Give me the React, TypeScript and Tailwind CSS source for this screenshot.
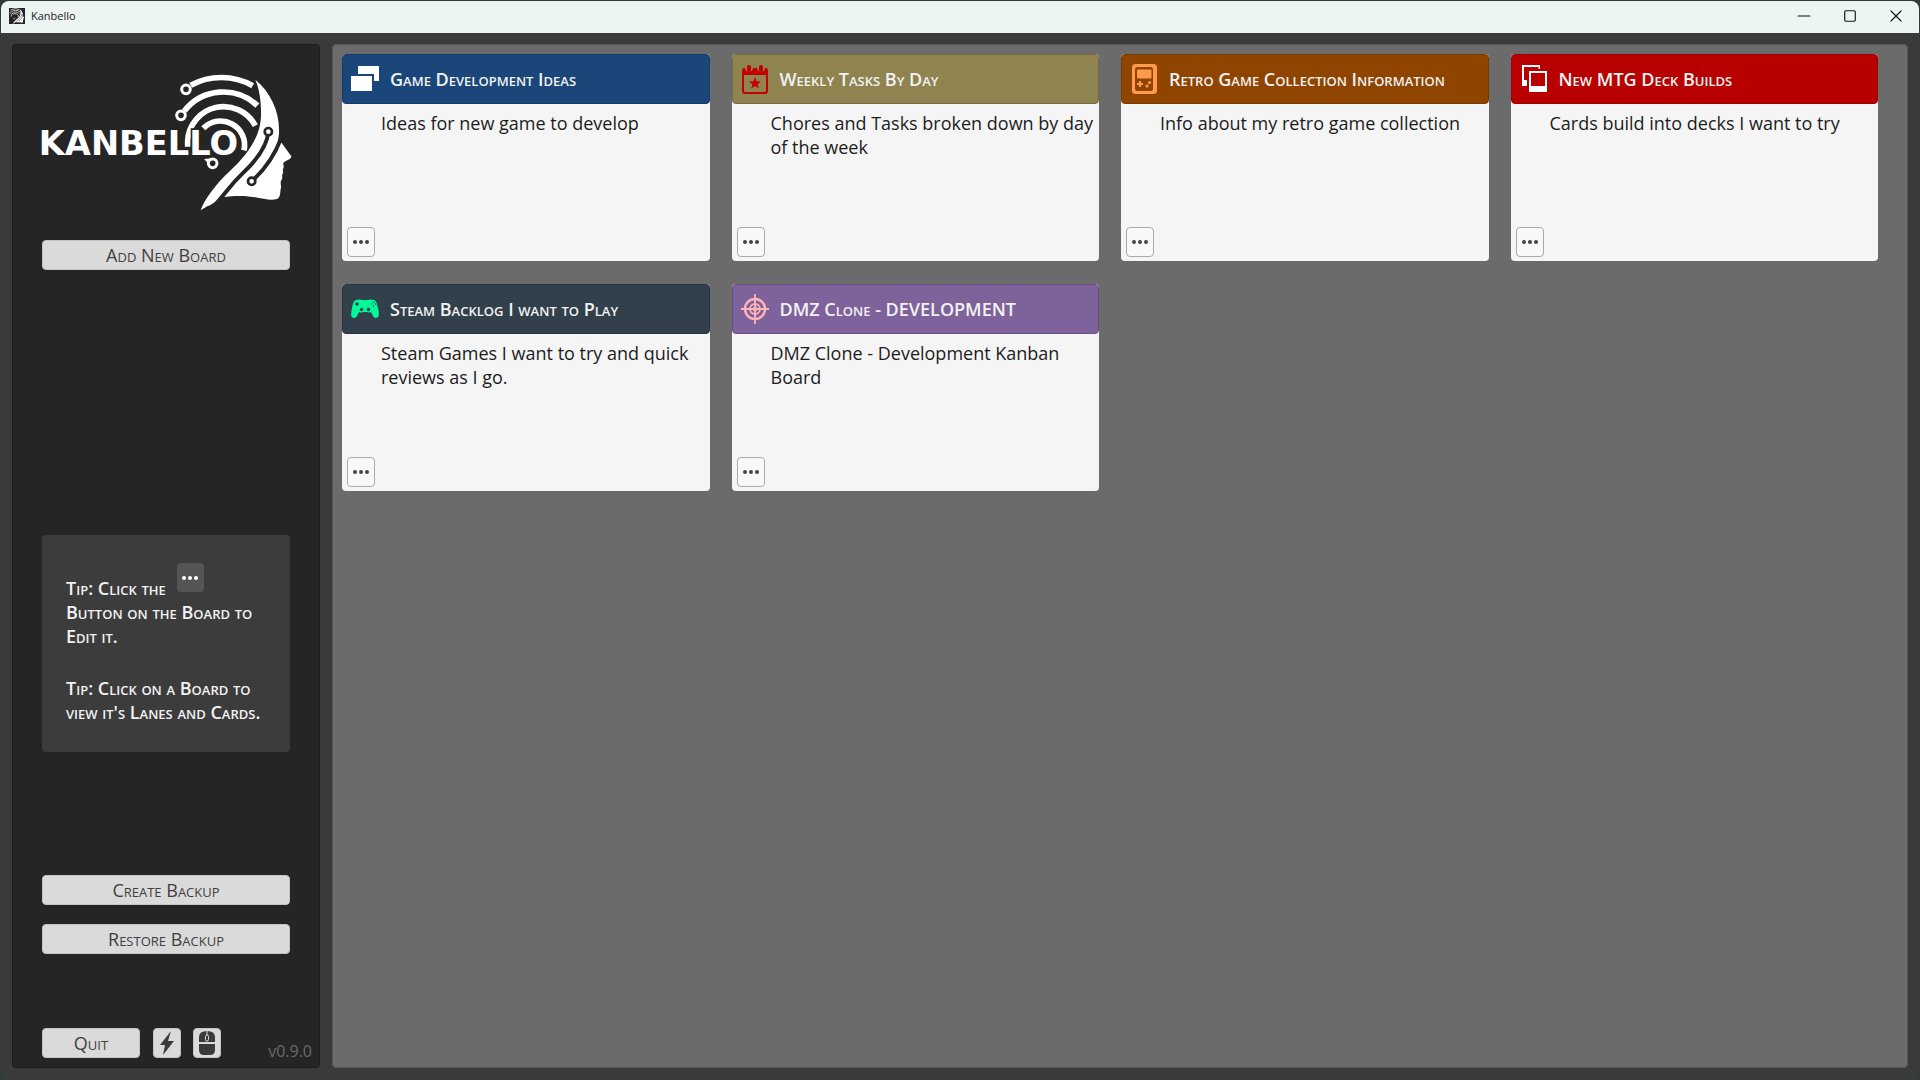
import React from "react";
import { Minus, Square, X } from "lucide-react";

type Board = {
  title: string;
  text: string;
  header: string;
  icon: React.ReactNode;
};

function WindowsIcon() {
  return (
    <svg viewBox="0 0 28 28" className="size-7" aria-hidden="true">
      <path d="M7 1h21v15h-5V9H7z" fill="#fff" />
      <rect x="0" y="11" width="21" height="15" fill="#fff" />
    </svg>
  );
}

function CalendarIcon() {
  return (
    <svg viewBox="0 0 28 30" className="h-[30px] w-7" aria-hidden="true">
      <path
        fillRule="evenodd"
        fill="#c40000"
        d="M3 4h1c0 5 8 5 8 0h4c0 5 8 5 8 0h1a2 2 0 0 1 2 2v21a3 3 0 0 1-3 3H4a3 3 0 0 1-3-3V6a2 2 0 0 1 2-2zM3 11v15.500a1.500 1.500 0 0 0 1.500 1.500h19a1.500 1.500 0 0 0 1.500-1.500V11z"
      />
      <rect x="6" y="1" width="4" height="7" rx="2" fill="#c40000" />
      <rect x="18" y="1" width="4" height="7" rx="2" fill="#c40000" />
      <path fill="#c40000" d="M14 13l1.600 4.200 4.400.2-3.400 2.800 1.200 4.400L14 22.100l-3.800 2.500 1.200-4.400L8 17.400l4.400-.2z" />
    </svg>
  );
}

function HandheldIcon() {
  return (
    <svg viewBox="0 0 28 30" className="h-[30px] w-7" aria-hidden="true">
      <rect x="2" y="0" width="25" height="30" rx="3.500" fill="#ff994d" />
      <rect x="5" y="3" width="18" height="24" rx="2.500" fill="#8f4400" />
      <rect x="7" y="5.500" width="14.500" height="9" rx="1" fill="#ff994d" />
      <path d="M10 17v6M7 20h6" stroke="#ff994d" strokeWidth="2" />
      <circle cx="19.500" cy="18.500" r="1.600" fill="#ff994d" />
      <circle cx="17" cy="22" r="1.600" fill="#ff994d" />
    </svg>
  );
}

function CardsIcon() {
  return (
    <svg viewBox="0 0 28 28" className="size-7" aria-hidden="true">
      <path d="M2 0h18v4h-1.500V2H4v13h3v6H2z" fill="#fff" />
      <path fillRule="evenodd" d="M9 6h18v21H9zM11 8v13h14V8z" fill="#fff" />
    </svg>
  );
}

function GamepadIcon() {
  return (
    <svg viewBox="0 0 28 20" className="h-5 w-7" aria-hidden="true">
      <path
        d="M5 1C8 0 10 .5 10.500 1h7C18 .5 20 0 23 1c2.500 1 3 3.500 4 8 1 4.500 1.500 8-.5 9.500-1.500 1-3.500.5-4.500-1.500l-2-4c-1 .8-3 .8-4 0h-4c-1 .8-3 .8-4 0l-2 4c-1 2-3 2.500-4.500 1.500-2-1.500-1.500-5-.5-9.500 1-4.500 1.500-7 4-8z"
        fill="#00fa9a"
      />
      <path d="M6 3v4M4 5h4" stroke="#31404b" strokeWidth="1.300" />
      <g fill="#31404b">
        <circle cx="22.500" cy="3" r=".8" />
        <circle cx="22.500" cy="7" r=".8" />
        <circle cx="20.500" cy="5" r=".8" />
        <circle cx="24.500" cy="5" r=".8" />
        <circle cx="10.500" cy="10.500" r="1.700" />
        <circle cx="17.500" cy="10.500" r="1.700" />
      </g>
    </svg>
  );
}

function CrosshairIcon() {
  return (
    <svg viewBox="0 0 28 30" className="h-[30px] w-7" fill="none" stroke="#ffb3b8" strokeWidth="2.400" aria-hidden="true">
      <circle cx="14" cy="15" r="10" />
      <circle cx="14" cy="15" r="5" strokeWidth="1.800" />
      <circle cx="14" cy="15" r="2" strokeWidth="1" />
      <path d="M14 0v30M0 15h28" strokeWidth="1.800" />
    </svg>
  );
}

const boards: Board[] = [
  { title: "Game Development Ideas", text: "Ideas for new game to develop", header: "bg-[#1b4679] border-[#123b6e]", icon: <WindowsIcon /> },
  { title: "Weekly Tasks By Day", text: "Chores and Tasks broken down by day of the week", header: "bg-[#8f8450] border-[#756a39]", icon: <CalendarIcon /> },
  { title: "Retro Game Collection Information", text: "Info about my retro game collection", header: "bg-[#8f4400] border-[#7a3900]", icon: <HandheldIcon /> },
  { title: "New MTG Deck Builds", text: "Cards build into decks I want to try", header: "bg-[#b80000] border-[#a00000]", icon: <CardsIcon /> },
  { title: "Steam Backlog I want to Play", text: "Steam Games I want to try and quick reviews as I go.", header: "bg-[#31404b] border-[#263540]", icon: <GamepadIcon /> },
  { title: "DMZ Clone - DEVELOPMENT", text: "DMZ Clone - Development Kanban Board", header: "bg-[#7e629b] border-[#6a4d88]", icon: <CrosshairIcon /> },
];

function Dots({ className }: { className: string }) {
  return (
    <svg viewBox="0 0 16 4" className={"h-1 w-4 " + className} fill="currentColor" aria-hidden="true">
      <circle cx="2" cy="2" r="2" />
      <circle cx="8" cy="2" r="2" />
      <circle cx="14" cy="2" r="2" />
    </svg>
  );
}

function LogoHead() {
  return (
    <>
      <g fill="none" stroke="#fff" strokeWidth="17">
        <path d="M482 61A193 193 0 0 1 668 62" />
        <path d="M463 138A148 148 0 0 1 682 122" />
        <path d="M473 245V228A108 108 0 0 1 676 182" />
        <path d="M520 190A72 72 0 0 1 642 256" />
      </g>
      <g fill="#252525" stroke="#fff" strokeWidth="9">
        <circle cx="468" cy="73" r="13" />
        <circle cx="453" cy="151" r="13" />
        <circle cx="548" cy="295" r="13" />
      </g>
      <path d="M522 282l24-2-10 16z" fill="#fff" />
      <path
        d="M676 44C722 82 750 140 747 205L744 232L755 234L784 274C784 284 766 287 762 292C756 298 764 302 760 310C756 318 762 320 758 326C754 332 759 338 755 344C748 352 756 364 752 372C750 384 752 396 741 402C705 412 672 382 576 397L540 421C528 424 520 432 512 436C522 406 556 358 600 318C650 270 692 218 693 150C694 110 688 72 676 44z"
        fill="#fff"
      />
      <g fill="none" stroke="#252525" strokeWidth="12">
        <path d="M715 200C712 245 680 285 640 323S590 380 560 414" />
        <path d="M665 349C700 318 733 275 754 218" />
      </g>
      <g fill="#fff" stroke="#252525" strokeWidth="8">
        <circle cx="715" cy="200" r="11" />
        <circle cx="665" cy="349" r="11" />
      </g>
    </>
  );
}

function Logo() {
  return (
    <svg viewBox="30 21 768 420" className="h-[140px] w-64" role="img" aria-label="Kanbello">
      <LogoHead />
      <text
        x="624"
        y="269"
        textAnchor="end"
        fill="#fff"
        stroke="#252525"
        strokeWidth="10"
        paintOrder="stroke"
        fontFamily="DejaVu Sans, sans-serif"
        fontWeight="700"
        fontSize="101"
      >
        KANBELLO
      </text>
    </svg>
  );
}

const sideButton =
  "flex h-[30px] items-center justify-center rounded border border-[#c4c4c4] bg-[#dadada] text-[#404040] [font-variant-caps:small-caps] text-[18px]";

export default function App() {
  return (
    <div className="min-h-screen bg-[#2f3d39] px-px pt-px font-['Open_Sans',sans-serif]">
      <div className="flex min-h-[calc(100vh-1px)] flex-col overflow-hidden rounded-lg bg-[#3a3a3a]">
        <header className="flex h-8 items-center justify-between bg-[#edf5f2] pr-[13px] pb-0.5 pl-2">
          <div className="flex items-center gap-[6px]">
            <svg viewBox="420 20 380 420" preserveAspectRatio="none" className="size-4 bg-[#252525]" aria-hidden="true">
              <LogoHead />
            </svg>
            <h1 className="text-[11px] leading-4 text-[#1a1a1a]">Kanbello</h1>
          </div>
          <div className="flex items-center gap-[29px] text-[#111]">
            <button type="button" aria-label="Minimize"><Minus className="size-5" strokeWidth={1.300} /></button>
            <button type="button" aria-label="Maximize"><Square className="size-[14px]" strokeWidth={2} /></button>
            <button type="button" aria-label="Close"><X className="size-5" strokeWidth={1.300} /></button>
          </div>
        </header>

        <div className="flex flex-1 gap-3 px-[11px] pt-[11px] pb-3">
          <aside className="flex w-[308px] shrink-0 flex-col rounded border border-[#1c1c1c] bg-[#252525] pt-[27px] pb-2">
            <div className="px-[27px]">
              <Logo />
            </div>
            <div className="flex flex-1 flex-col px-[29px]">
              <button type="button" className={sideButton + " mt-7"}>Add New Board</button>
              <div className="flex-[13]" />
              <section className="flex flex-col gap-7 rounded bg-[#3c3c3c] px-6 py-7 text-[18px] leading-6 font-semibold text-[#f2f2f2] [font-variant-caps:small-caps]">
                <p>
                  <span className="flex items-end gap-[11px]">
                    Tip: Click the
                    <span className="mb-2 flex h-[29px] w-[27px] items-center justify-center rounded bg-[#555]">
                      <Dots className="text-white" />
                    </span>
                  </span>
                  Button on the Board to Edit it.
                </p>
                <p>Tip: Click on a Board to view it's Lanes and Cards.</p>
              </section>
              <div className="flex-[6]" />
              <div className="flex flex-col gap-[19px]">
                <button type="button" className={sideButton}>Create Backup</button>
                <button type="button" className={sideButton}>Restore Backup</button>
              </div>
            </div>
            <div className="mt-[73px] flex items-center pr-[7px] pl-[29px]">
              <button type="button" className={sideButton + " w-[98px]"}>Quit</button>
              <button type="button" aria-label="Power options" className={sideButton + " ml-[13px] w-7"}>
                <svg viewBox="0 0 16 24" className="h-6 w-4" fill="#3a3a3a" aria-hidden="true">
                  <path d="M12 0L1 14h5L4 24 15 10H9z" />
                </svg>
              </button>
              <button type="button" aria-label="Mouse settings" className={sideButton + " ml-3 w-7"}>
                <svg viewBox="0 0 16 24" className="h-6 w-4" aria-hidden="true">
                  <path d="M0 11V6q0-6 8-6t8 6v5zM0 13h16v6q0 5-5 5H5q-5 0-5-5z" fill="#3a3a3a" />
                  <rect x="6.500" y="4" width="3" height="6" rx="1.500" fill="#3a3a3a" stroke="#dadada" />
                  <path d="M8 0v4" stroke="#dadada" />
                </svg>
              </button>
              <span className="mt-4 ml-auto text-base leading-4 text-[#6a6a6a]">v0.9.0</span>
            </div>
          </aside>

          <main className="flex-1 rounded border border-[#555] bg-[#6b6b6b] pt-[9px] pr-[29px] pl-[9px]">
            <div className="grid grid-cols-4 gap-x-[22px] gap-y-[23px]">
              {boards.map((b) => (
                <article key={b.title} className="flex h-[207px] flex-col rounded bg-[#f5f5f5]">
                  <header className={"flex h-[50px] items-center gap-[11px] rounded border pl-2 " + b.header}>
                    {b.icon}
                    <h2 className="text-[18px] font-semibold whitespace-nowrap text-[#f2f2f2] [font-variant-caps:small-caps]">{b.title}</h2>
                  </header>
                  <p className="flex-1 pt-[7px] pr-1 pl-[39px] text-[18px] leading-6 text-[#1c1c1c]">{b.text}</p>
                  <button
                    type="button"
                    aria-label={"Edit " + b.title}
                    className="mb-1 ml-[5px] flex h-[30px] w-7 items-center justify-center rounded border border-[#aaa] bg-[#f8f8f8]"
                  >
                    <Dots className="text-[#444]" />
                  </button>
                </article>
              ))}
            </div>
          </main>
        </div>
      </div>
    </div>
  );
}
